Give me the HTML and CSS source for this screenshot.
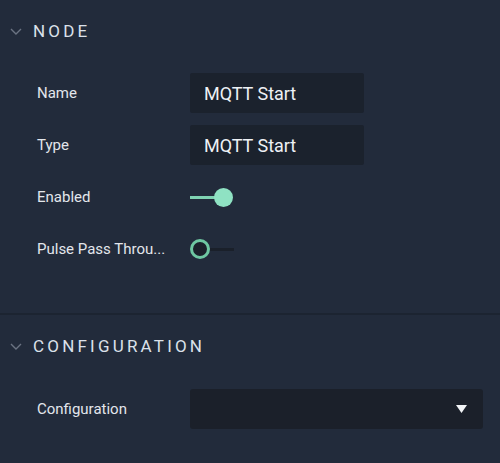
FILE: index.html
```html
<!DOCTYPE html>
<html>
<head>
<meta charset="utf-8">
<link rel="stylesheet" href="styles.css">
</head>
<body>
<div class="panel">
  <section class="section">
    <div class="section-header">
      <svg class="chevron" width="12" height="7" viewBox="0 0 12 7"><path d="M1 1 L6 6 L11 1" fill="none" stroke="#6b7382" stroke-width="1.4"/></svg>
      <span class="section-title">NODE</span>
    </div>
    <div class="section-body">
      <div class="row">
        <div class="label">Name</div>
        <div class="input">MQTT Start</div>
      </div>
      <div class="row">
        <div class="label">Type</div>
        <div class="input">MQTT Start</div>
      </div>
      <div class="row">
        <div class="label">Enabled</div>
        <div class="toggle on"><span class="track"></span><span class="knob"></span></div>
      </div>
      <div class="row">
        <div class="label">Pulse Pass Throu...</div>
        <div class="toggle off"><span class="knob"></span><span class="track"></span></div>
      </div>
    </div>
  </section>
  <div class="separator"></div>
  <section class="section">
    <div class="section-header">
      <svg class="chevron" width="12" height="7" viewBox="0 0 12 7"><path d="M1 1 L6 6 L11 1" fill="none" stroke="#6b7382" stroke-width="1.4"/></svg>
      <span class="section-title">CONFIGURATION</span>
    </div>
    <div class="section-body last">
      <div class="row">
        <div class="label">Configuration</div>
        <div class="select">
          <svg class="caret" width="11" height="8" viewBox="0 0 11 8"><path d="M0 0 H11 L5.5 8 Z" fill="#f2f4f7"/></svg>
        </div>
      </div>
    </div>
  </section>
</div>
</body>
</html>
```

FILE: styles.css
```css
html, body {
  margin: 0;
  padding: 0;
  background: #222b3b;
}
body {
  font-family: Roboto, "Liberation Sans", sans-serif;
  color: #e4e8ee;
  width: 500px;
  height: 463px;
  overflow: hidden;
}
.panel {
  display: flex;
  flex-direction: column;
}
.section-header {
  display: flex;
  align-items: center;
  height: 62px;
  padding-left: 10px;
  box-sizing: border-box;
}
.chevron {
  display: block;
  margin-right: 11px;
}
.section-title {
  font-size: 17px;
  letter-spacing: 3.2px;
  color: #dbe1ea;
  font-weight: 400;
}
.section-body {
  display: flex;
  flex-direction: column;
  gap: 12px;
  padding: 11px 17px 44px 37px;
}
.section-body.last {
  padding-top: 12px;
}
.row {
  display: flex;
  align-items: center;
  height: 40px;
}
.label {
  width: 153px;
  flex: none;
  font-size: 15px;
  color: #e2e6ec;
  white-space: nowrap;
}
.input {
  width: 174px;
  height: 40px;
  box-sizing: border-box;
  background: #1b222d;
  border-radius: 2px;
  padding-left: 14px;
  display: flex;
  align-items: center;
  font-size: 18px;
  color: #eef1f5;
}
.select {
  flex: 1;
  height: 40px;
  background: #1b202a;
  border-radius: 3px;
  display: flex;
  align-items: center;
  justify-content: flex-end;
  padding-right: 16px;
}
.caret {
  display: block;
}
.toggle {
  display: flex;
  align-items: center;
  width: 44px;
  height: 20px;
}
.toggle.on .track {
  width: 26px;
  height: 3px;
  background: #7fd3b2;
}
.toggle.on .knob {
  width: 19px;
  height: 19px;
  border-radius: 50%;
  background: #8fe2c3;
  margin-left: -2px;
}
.toggle.off .knob {
  width: 20px;
  height: 20px;
  box-sizing: border-box;
  border-radius: 50%;
  border: 3px solid #6ec7a2;
  background: #1b212b;
}
.toggle.off .track {
  width: 24px;
  height: 3px;
  background: #1a202a;
}
.separator {
  height: 2px;
  background: #1c2431;
}
```
